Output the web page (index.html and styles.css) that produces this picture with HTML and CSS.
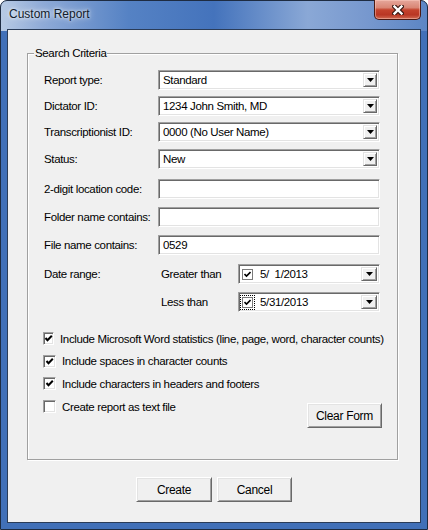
FILE: index.html
```html
<!DOCTYPE html>
<html lang="en">

<head>
    <meta charset="UTF-8">
    <title>Custom Report</title>
    <link rel="stylesheet" href="styles.css">
</head>

<body>
    <div class="window">
        <div class="titleBar">
            <span class="title">Custom Report</span>
            <div class="closeBtn">
                <svg width="12" height="10" viewBox="0 0 12 10">
                    <path d="M2.5 1.5 L9.5 8.5 M9.5 1.5 L2.5 8.5" stroke="#3b1a14" stroke-width="4.6" stroke-linecap="square" fill="none"/>
                    <path d="M2.5 1.5 L9.5 8.5 M9.5 1.5 L2.5 8.5" stroke="#fff" stroke-width="2.4" stroke-linecap="square" fill="none"/>
                </svg>
            </div>
        </div>

        <div class="client">
            <div class="group">
                <span class="groupTitle">Search Criteria</span>

                <div class="row comboRow">
                    <span class="fieldLabel">Report type:</span>
                    <div class="combo"><span class="comboText">Standard</span><span class="dropBtn"><svg width="7" height="4" viewBox="0 0 7 4"><polygon points="0,0 7,0 3.5,4" fill="#000"/></svg></span></div>
                </div>
                <div class="row comboRow">
                    <span class="fieldLabel">Dictator ID:</span>
                    <div class="combo"><span class="comboText">1234 John Smith, MD</span><span class="dropBtn"><svg width="7" height="4" viewBox="0 0 7 4"><polygon points="0,0 7,0 3.5,4" fill="#000"/></svg></span></div>
                </div>
                <div class="row comboRow wide">
                    <span class="fieldLabel">Transcriptionist ID:</span>
                    <div class="combo"><span class="comboText">0000 (No User Name)</span><span class="dropBtn"><svg width="7" height="4" viewBox="0 0 7 4"><polygon points="0,0 7,0 3.5,4" fill="#000"/></svg></span></div>
                </div>
                <div class="row comboRow lastCombo">
                    <span class="fieldLabel">Status:</span>
                    <div class="combo"><span class="comboText">New</span><span class="dropBtn"><svg width="7" height="4" viewBox="0 0 7 4"><polygon points="0,0 7,0 3.5,4" fill="#000"/></svg></span></div>
                </div>

                <div class="row textRow">
                    <span class="fieldLabel">2-digit location code:</span>
                    <div class="textBox"></div>
                </div>
                <div class="row textRow">
                    <span class="fieldLabel">Folder name contains:</span>
                    <div class="textBox"></div>
                </div>
                <div class="row textRow lastText">
                    <span class="fieldLabel">File name contains:</span>
                    <div class="textBox">0529</div>
                </div>

                <div class="row dateRow">
                    <span class="fieldLabel">Date range:</span>
                    <span class="subLabel">Greater than</span>
                    <div class="datePick">
                        <span class="miniCheck"><svg width="7" height="7" viewBox="0 0 7 7"><path d="M0.5 3 L2.5 5 L6.5 1" stroke="#000" stroke-width="1.6" fill="none"/></svg></span>
                        <span class="dateText">5/  1/2013</span>
                        <span class="dropBtn dateBtn"><svg width="7" height="4" viewBox="0 0 7 4"><polygon points="0,0 7,0 3.5,4" fill="#000"/></svg></span>
                    </div>
                </div>
                <div class="row dateRow">
                    <span class="fieldLabel"></span>
                    <span class="subLabel">Less than</span>
                    <div class="datePick">
                        <span class="focusRing"><span class="miniCheck"><svg width="7" height="7" viewBox="0 0 7 7"><path d="M0.5 3 L2.5 5 L6.5 1" stroke="#000" stroke-width="1.6" fill="none"/></svg></span></span>
                        <span class="dateText">5/31/2013</span>
                        <span class="dropBtn dateBtn"><svg width="7" height="4" viewBox="0 0 7 4"><polygon points="0,0 7,0 3.5,4" fill="#000"/></svg></span>
                    </div>
                </div>

                <div class="checks">
                    <div class="checkRow">
                        <span class="checkbox"><svg width="9" height="9" viewBox="0 0 9 9"><path d="M1.5 4 L3.5 6.2 L7.8 1.8" stroke="#000" stroke-width="2" fill="none"/></svg></span>
                        <span>Include Microsoft Word statistics (line, page, word, character counts)</span>
                    </div>
                    <div class="checkRow short">
                        <span class="checkbox"><svg width="9" height="9" viewBox="0 0 9 9"><path d="M1.5 4 L3.5 6.2 L7.8 1.8" stroke="#000" stroke-width="2" fill="none"/></svg></span>
                        <span>Include spaces in character counts</span>
                    </div>
                    <div class="checkRow">
                        <span class="checkbox"><svg width="9" height="9" viewBox="0 0 9 9"><path d="M1.5 4 L3.5 6.2 L7.8 1.8" stroke="#000" stroke-width="2" fill="none"/></svg></span>
                        <span>Include characters in headers and footers</span>
                    </div>
                    <div class="lastRow">
                        <div class="checkRow">
                            <span class="checkbox"></span>
                            <span>Create report as text file</span>
                        </div>
                        <button class="btn clearBtn">Clear Form</button>
                    </div>
                </div>
            </div>

            <div class="actions">
                <button class="btn createBtn">Create</button>
                <button class="btn">Cancel</button>
            </div>
        </div>
    </div>
</body>

</html>
```

FILE: styles.css
```css
* {
    margin: 0px;
    padding: 0px;
    box-sizing: border-box;
}

body {
    width: 428px;
    height: 530px;
    overflow: hidden;
    background-color: #fff;
    font-family: "Liberation Sans", Arial, sans-serif;
    font-size: 11.5px;
    letter-spacing: -0.35px;
    color: #000;
}

/* aero frame */
.window {
    width: 428px;
    height: 530px;
    border: 1px solid #1e2c42;
    border-radius: 7px 7px 0px 0px;
    background:
        linear-gradient(90deg, #b7cae4 0%, #8eaad7 10%, #5582c4 30%, #4473bc 50%, #8aa8d6 72%, #7798ce 86%, #5c86c5 100%) top / 100% 30px no-repeat,
        #4170b8;
    display: flex;
    flex-direction: column;
}

.titleBar {
    height: 28px;
    display: flex;
    justify-content: space-between;
    align-items: flex-start;
    padding-left: 8px;
}

.title {
    font-family: "Liberation Sans", Arial, sans-serif;
    font-size: 12px;
    letter-spacing: 0px;
    line-height: 27px;
    color: #111b2b;
    text-shadow: 0px 0px 6px rgba(255, 255, 255, 0.9), 0px 0px 3px rgba(255, 255, 255, 0.8);
}

.closeBtn {
    width: 47px;
    height: 20px;
    margin-top: -1px;
    margin-right: 6px;
    border: 1px solid #4a1a14;
    border-top: none;
    border-radius: 0px 0px 5px 5px;
    background: linear-gradient(180deg, #e6a89c 0%, #d98675 40%, #c4432d 52%, #b93724 78%, #d06a52 100%);
    box-shadow: inset 0px 0px 0px 1px rgba(255, 210, 200, 0.45);
    display: flex;
    justify-content: center;
    align-items: center;
}

.client {
    flex: 1;
    margin: 0px 6px 6px 6px;
    border: 1px solid #2a3c58;
    background-color: #f0f0f0;
}

/* group box */
.group {
    position: relative;
    width: 371px;
    margin: 23px 0px 0px 19px;
    padding: 16px 17px 31px 16px;
    border: 1px solid #a0a0a0;
    box-shadow: inset 1px 1px 0px #fff, 1px 1px 0px #fff;
}

.groupTitle {
    position: absolute;
    top: -8px;
    left: 6px;
    padding: 0px 1px;
    line-height: 14px;
    background-color: #f0f0f0;
}

.row {
    display: flex;
    align-items: center;
    white-space: nowrap;
}

.fieldLabel {
    width: 114px;
    flex-shrink: 0;
}

.comboRow {
    height: 20px;
    margin-bottom: 6px;
}

.comboRow.wide {
    margin-bottom: 7px;
}

.lastCombo {
    margin-bottom: 10px;
}

.textRow {
    height: 20px;
    margin-bottom: 8px;
}

.lastText {
    margin-bottom: 9px;
}

.dateRow {
    height: 20px;
    margin-bottom: 8px;
}

/* sunken 3d edge shared by the inputs */
.combo,
.textBox,
.datePick {
    height: 100%;
    background-color: #fff;
    border-top: 1px solid #a0a0a0;
    border-left: 1px solid #a0a0a0;
    border-right: 1px solid #fff;
    border-bottom: 1px solid #fff;
    box-shadow: inset 1px 1px 0px #696969, inset -1px -1px 0px #e3e3e3;
}

.combo {
    flex: 1;
    display: flex;
    align-items: center;
    justify-content: space-between;
    padding: 2px 2px 2px 4px;
}

.textBox {
    flex: 1;
    padding-left: 4px;
    line-height: 18px;
}

.dropBtn {
    width: 14px;
    height: 100%;
    background-color: #f0f0f0;
    border-top: 1px solid #e3e3e3;
    border-left: 1px solid #e3e3e3;
    border-right: 1px solid #696969;
    border-bottom: 1px solid #696969;
    box-shadow: inset 1px 1px 0px #fff, inset -1px -1px 0px #a0a0a0;
    display: flex;
    justify-content: center;
    align-items: center;
}

.subLabel {
    width: 80px;
    flex-shrink: 0;
    padding-left: 3px;
}

.datePick {
    width: 142px;
    display: flex;
    align-items: center;
    padding: 2px 2px 2px 3px;
}

.miniCheck {
    width: 11px;
    height: 11px;
    background-color: #fff;
    border: 1px solid #7a7a7a;
    display: flex;
    justify-content: center;
    align-items: center;
}

.focusRing {
    margin: -2px;
    padding: 1px;
    border: 1px dotted #000;
    display: flex;
}

.dateText {
    flex: 1;
    margin-left: 7px;
    white-space: pre;
}

.dateBtn {
    width: 16px;
}

/* checkboxes */
.checks {
    margin-top: 15px;
}

.checkRow {
    height: 23px;
    display: flex;
    align-items: center;
    margin-left: -1px;
    white-space: nowrap;
}

.checkRow.short {
    height: 22px;
}

.checkbox {
    width: 13px;
    height: 13px;
    margin-right: 6px;
    background-color: #fff;
    border-top: 1px solid #a0a0a0;
    border-left: 1px solid #a0a0a0;
    border-right: 1px solid #fff;
    border-bottom: 1px solid #fff;
    box-shadow: inset 1px 1px 0px #696969, inset -1px -1px 0px #e3e3e3;
    display: flex;
    justify-content: center;
    align-items: center;
}

.lastRow {
    display: flex;
    justify-content: space-between;
    align-items: flex-start;
}

/* raised buttons */
.btn {
    width: 75px;
    height: 25px;
    font-family: inherit;
    font-size: 12px;
    letter-spacing: -0.3px;
    color: #000;
    background-color: #f0f0f0;
    border-top: 1px solid #fff;
    border-left: 1px solid #fff;
    border-right: 1px solid #696969;
    border-bottom: 1px solid #696969;
    box-shadow: inset 1px 1px 0px #e3e3e3, inset -1px -1px 0px #a0a0a0;
}

.clearBtn {
    margin-top: 8px;
    margin-right: -2px;
}

.actions {
    display: flex;
    justify-content: center;
    gap: 5px;
    margin-top: 17px;
}

.createBtn {
    width: 76px;
}
```
